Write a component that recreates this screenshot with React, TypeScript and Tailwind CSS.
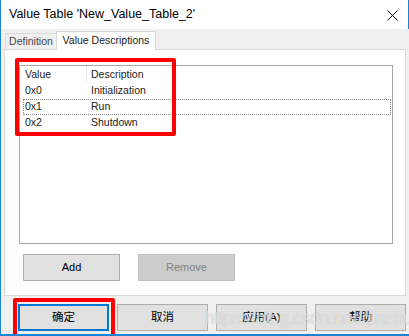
const font = { fontFamily: '"Liberation Sans", "Noto Sans CJK SC", sans-serif' }

const rows = [
  { value: '0x0', desc: 'Initialization' },
  { value: '0x1', desc: 'Run', focus: true },
  { value: '0x2', desc: 'Shutdown' },
]

function Btn({ label, primary }: { label: string; primary?: boolean }) {
  return (
    <div
      className={`w-[91px] h-[27px] flex items-center justify-center bg-[#e1e1e1] border text-[11.5px] text-black ${
        primary ? 'border-[#0078d7] shadow-[inset_0_0_0_1px_#0078d7]' : 'border-[#adadad]'
      }`}
    >
      {label}
    </div>
  )
}

export default function App() {
  return (
    <div
      className="relative w-[409px] h-[336px] bg-[#f0f0f0] border-l border-b-2 border-[#1883d7] flex flex-col overflow-hidden"
      style={font}
    >
      {/* Title bar */}
      <div className="h-[29px] shrink-0 bg-white border-r border-[#1883d7] flex items-center justify-between pl-[8px] pr-[10px]">
        <span className="text-[12.5px] text-black">Value Table 'New_Value_Table_2'</span>
        <svg width="11" height="11" viewBox="0 0 11 11" className="mt-[2px]">
          <path d="M0.5 0.5 L10.5 10.5 M10.5 0.5 L0.5 10.5" stroke="#000" strokeWidth="1" />
        </svg>
      </div>

      {/* Tabs */}
      <div className="h-[20px] flex items-end pl-[4px] text-[10.5px]">
        <div className="h-[16px] w-[52px] flex items-center justify-center border border-b-0 border-[#d9d9d9] bg-[#f0f0f0] text-[#444]">
          Definition
        </div>
        <div className="relative z-10 -ml-px -mb-px h-[19px] w-[100px] flex items-center justify-center border border-b-0 border-[#d9d9d9] bg-white text-[#222]">
          Value Descriptions
        </div>
      </div>

      {/* Panel */}
      <div className="mx-[3px] h-[247px] border border-[#d9d9d9] bg-white pl-[14px] pt-[15px]">
        <div className="w-[374px] h-[179px] border border-[#a5a7ab] text-[10.5px] text-[#222]">
          <div className="h-[17px] flex items-center">
            <div className="w-[67px] h-full pl-[5px] flex items-center border-r border-[#e5e5e5]">Value</div>
            <div className="pl-[4px]">Description</div>
          </div>
          {rows.map((r) => (
            <div
              key={r.value}
              className={`ml-[3px] w-[368px] h-[16px] flex items-center border border-dotted ${
                r.focus ? 'border-[#8a8a8a]' : 'border-transparent'
              }`}
            >
              <div className="w-[66px] pl-[1px]">{r.value}</div>
              <div className="pl-[1px]">{r.desc}</div>
            </div>
          ))}
        </div>
        <div className="mt-[10px] ml-[4px] flex gap-[18px] text-[11px]">
          <div className="w-[97px] h-[27px] flex items-center justify-center bg-[#e1e1e1] border border-[#adadad] text-black">
            Add
          </div>
          <div className="w-[97px] h-[27px] flex items-center justify-center bg-[#cccccc] border border-[#bfbfbf] text-[#838383]">
            Remove
          </div>
        </div>
      </div>

      {/* Dialog buttons */}
      <div className="mt-[8px] pl-[17px] flex gap-[8px]">
        <Btn label="确定" primary />
        <Btn label="取消" />
        <Btn label="应用(A)" />
        <Btn label="帮助" />
      </div>

      {/* Annotations */}
      <div className="absolute left-[14px] top-[58px] w-[161px] h-[78px] border-[4px] border-[#ff0000] rounded-[2px]" />
      <div className="absolute left-[12px] top-[298px] w-[102px] h-[40px] border-[4px] border-[#ff0000] rounded-[2px]" />

      {/* Watermark */}
      <div className="absolute left-[204px] top-[305px] text-[17.5px] tracking-[-0.2px] text-white/60 [text-shadow:0_0_1px_rgba(140,140,140,0.6)] whitespace-nowrap">
        https://blog.csdn.net/qinzhu
      </div>
    </div>
  )
}
